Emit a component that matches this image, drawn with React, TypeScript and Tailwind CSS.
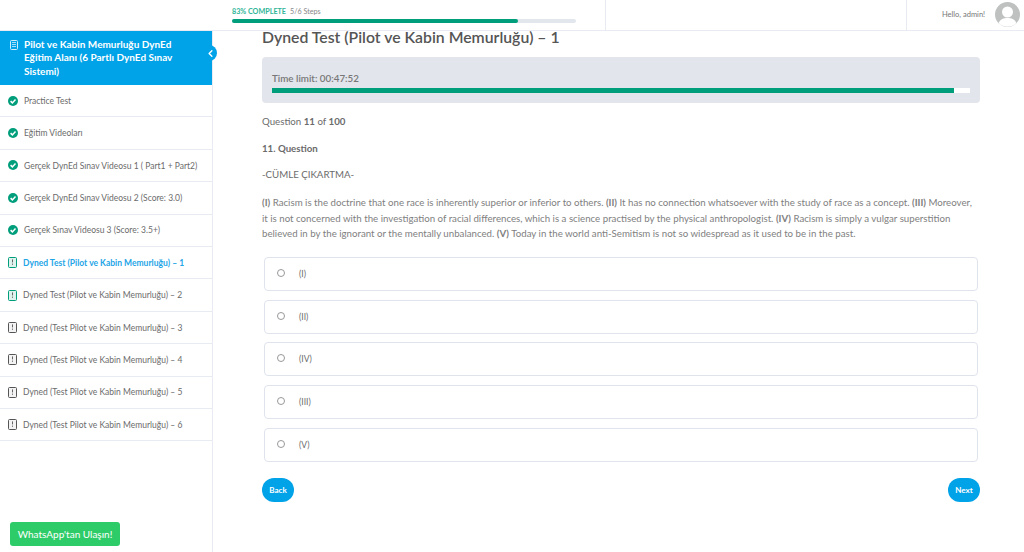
import { ChevronLeft } from 'lucide-react';

const lessons = [
  { label: 'Practice Test', done: true },
  { label: 'Eğitim Videoları', done: true },
  { label: 'Gerçek DynEd Sınav Videosu 1 ( Part1 + Part2)', done: true },
  { label: 'Gerçek DynEd Sınav Videosu 2 (Score: 3.0)', done: true },
  { label: 'Gerçek Sınav Videosu 3 (Score: 3.5+)', done: true },
  { label: 'Dyned Test (Pilot ve Kabin Memurluğu) – 1', active: true, quiz: 'green' },
  { label: 'Dyned Test (Pilot ve Kabin Memurluğu) – 2', quiz: 'green' },
  { label: 'Dyned (Test Pilot ve Kabin Memurluğu) – 3' },
  { label: 'Dyned (Test Pilot ve Kabin Memurluğu) – 4' },
  { label: 'Dyned (Test Pilot ve Kabin Memurluğu) – 5' },
  { label: 'Dyned (Test Pilot ve Kabin Memurluğu) – 6' },
];

const answers = ['(I)', '(II)', '(IV)', '(III)', '(V)'];

function CheckIcon() {
  return (
    <svg width="10" height="10" viewBox="0 0 10 10" className="mb-[1px] shrink-0">
      <circle cx="5" cy="5" r="5" fill="#019e7c" />
      <path d="M2.6 5.1 4.4 6.9 7.5 3.6" fill="none" stroke="#fff" strokeWidth="1.5" />
    </svg>
  );
}

function QuizIcon({ color }: { color: string }) {
  return (
    <svg width="9" height="11" viewBox="0 0 9 11" className="mb-[1px] shrink-0">
      <rect x="0.5" y="0.5" width="8" height="10" rx="1" fill={color === '#555' ? '#f3f3f3' : '#dff3ee'} stroke={color} />
      <path d="M4.5 2.4v3M4.5 6.6v1.2" stroke="#555" strokeWidth="0.9" fill="none" />
    </svg>
  );
}

function CourseIcon() {
  return (
    <svg width="8" height="10" viewBox="0 0 8 10" className="mt-[2px] shrink-0">
      <rect x="0.5" y="0.5" width="7" height="9" rx="1" fill="none" stroke="#cfeefb" />
      <path d="M2 2.5h4M2 4.5h4M2 6.5h4" stroke="#cfeefb" strokeWidth="0.8" />
    </svg>
  );
}

export default function App() {
  return (
    <div className="h-[552px] w-[1024px] overflow-hidden bg-white font-['Lato','Noto_Sans',sans-serif] text-[#6b6b6b]">
      {/* top bar */}
      <header className="flex h-[31px] border-b border-[#e8ebf1]">
        <div className="w-[232px] shrink-0" />
        <div className="w-[373px] shrink-0 pt-[7px]">
          <div className="flex items-center gap-[4px] text-[7.2px] leading-[10px]">
            <span className="font-bold text-[#2fb597]">83% COMPLETE</span>
            <span className="text-[#888]">5/6 Steps</span>
          </div>
          <div className="mt-[2px] h-[4px] w-[344px] rounded-full bg-[#e2e7ed]">
            <div className="h-full w-[286px] rounded-full bg-[#019e7c]" />
          </div>
        </div>
        <div className="w-[301px] shrink-0 border-l border-[#e8ebf1]" />
        <div className="flex flex-1 items-center border-l border-[#e8ebf1] pl-[35px]">
          <span className="whitespace-nowrap text-[7.5px] text-[#777]">Hello, admin!</span>
          <svg width="25" height="25" viewBox="0 0 25 25" className="mb-[2px] ml-[10px] shrink-0">
            <circle cx="12.5" cy="12.5" r="12.5" fill="#bfc1c1" />
            <circle cx="12.5" cy="10" r="5.5" fill="#fff" />
            <path d="M3.5 21c2-4 5-5 9-5s7 1 9 5a12.5 12.5 0 0 1-18 0z" fill="#fff" />
          </svg>
        </div>
      </header>

      <div className="flex h-[521px]">
        {/* sidebar */}
        <aside className="relative flex w-[213px] shrink-0 flex-col border-r border-[#e8ebf1]">
          <div className="flex h-[54px] shrink-0 gap-[6px] bg-[#00a2e8] pl-[10px] pr-[24px] pt-[7px] text-white">
            <CourseIcon />
            <span className="text-[10px] font-bold leading-[13.3px]">
              Pilot ve Kabin Memurluğu DynEd Eğitim Alanı (6 Partlı DynEd Sınav Sistemi)
            </span>
          </div>
          <div className="absolute left-[203px] top-[14px] flex h-[16px] w-[14px] items-center justify-center rounded-r-full bg-[#00a2e8] text-white">
            <ChevronLeft size={11} strokeWidth={3} />
          </div>
          {lessons.map((item) => (
            <div
              key={item.label}
              className="flex h-[32.4px] shrink-0 items-center gap-[6px] border-b border-[#e8ebf1] pl-[8px] pt-[1px] text-[8.5px]"
            >
              {item.done ? <CheckIcon /> : <QuizIcon color={item.quiz ? '#019e7c' : '#555'} />}
              <span className={item.active ? 'font-bold text-[#1ea5e6]' : 'text-[#6b6b6b]'}>{item.label}</span>
            </div>
          ))}
          <div className="absolute bottom-[6px] left-[10px] flex h-[24px] w-[110px] items-center justify-center rounded-[3px] bg-[#2ecc68] text-[10px] text-white">
            WhatsApp'tan Ulaşın!
          </div>
        </aside>

        {/* lesson body */}
        <main className="flex-1 pl-[49px] pr-[44px]">
          <h1 className="mt-[-1px] text-[15.8px] font-semibold leading-[14px] text-[#555]">Dyned Test (Pilot ve Kabin Memurluğu) – 1</h1>
          <div className="mt-[13px] h-[46px] rounded-[4px] bg-[#e2e5ec] px-[10px] pt-[15px]">
            <div className="text-[9.8px] font-semibold leading-[12px] text-[#777]">Time limit: 00:47:52</div>
            <div className="mt-[4px] h-[5px] bg-white">
              <div className="h-full w-[682px] bg-[#019e7c]" />
            </div>
          </div>
          <p className="mt-[12px] text-[9.7px] leading-[12px]">
            Question <b>11</b> of <b>100</b>
          </p>
          <p className="mt-[15px] text-[9.7px] font-bold leading-[12px]">11. Question</p>
          <p className="mt-[14px] text-[9.7px] leading-[12px]">-CÜMLE ÇIKARTMA-</p>
          <p className="mt-[15px] text-[9.7px] leading-[15.5px] text-[#808080]">
            <b>(I)</b> Racism is the doctrine that one race is inherently superior or inferior to others. <b>(II)</b> It has no connection whatsoever with the study of race as a concept. <b>(III)</b> Moreover, it is not concerned with the investigation of racial differences, which is a science practised by the physical anthropologist. <b>(IV)</b> Racism is simply a vulgar superstition believed in by the ignorant or the mentally unbalanced. <b>(V)</b> Today in the world anti-Semitism is not so widespread as it used to be in the past.
          </p>
          <div className="mt-[15.4px] flex flex-col gap-[8.7px] px-[2px]">
            {answers.map((a) => (
              <div key={a} className="flex h-[34px] items-center rounded-[4px] border border-[#dfe3ec] pl-[12px]">
                <span className="mb-[2px] h-[8px] w-[8px] rounded-full border border-[#999] bg-white" />
                <span className="ml-[14px] mt-[1px] text-[8.5px]">{a}</span>
              </div>
            ))}
          </div>
          <div className="mt-[16px] flex justify-between">
            <button className="h-[24px] w-[32px] rounded-full bg-[#00a2e8] text-[8px] font-bold text-white">Back</button>
            <button className="h-[24px] w-[32px] rounded-full bg-[#00a2e8] text-[8px] font-bold text-white">Next</button>
          </div>
        </main>
      </div>
    </div>
  );
}
